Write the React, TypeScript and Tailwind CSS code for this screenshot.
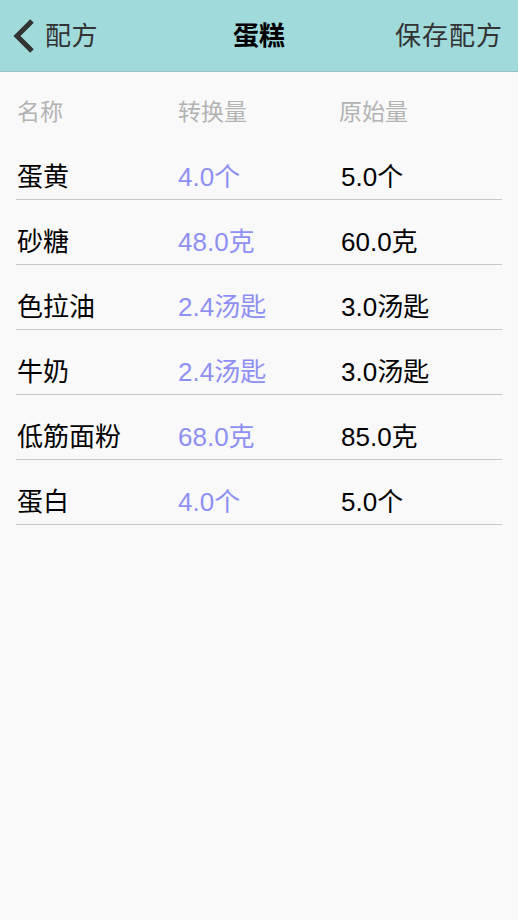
import React from 'react';

type Ingredient = {
  name: string;
  converted: string;
  original: string;
};

const ingredients: Ingredient[] = [
  { name: '蛋黄', converted: '4.0个', original: '5.0个' },
  { name: '砂糖', converted: '48.0克', original: '60.0克' },
  { name: '色拉油', converted: '2.4汤匙', original: '3.0汤匙' },
  { name: '牛奶', converted: '2.4汤匙', original: '3.0汤匙' },
  { name: '低筋面粉', converted: '68.0克', original: '85.0克' },
  { name: '蛋白', converted: '4.0个', original: '5.0个' },
];

const font = { fontFamily: '"Liberation Sans", "Noto Sans CJK SC", sans-serif' };

export default function App() {
  return (
    <div className="min-h-[920px] w-[518px] bg-[#f9f9f9]" style={font}>
      {/* nav bar */}
      <div className="grid h-[72px] grid-cols-[1fr_auto_1fr] items-center border-b border-[#98c4c5] bg-[#a0dadb] pl-[12px] pr-[15px]">
        <button className="flex items-center gap-[9px] justify-self-start text-[26px] leading-[30px] text-[#333]">
          <svg className="h-[34px] w-[24px]" viewBox="0 0 24 34" fill="none">
            <path d="M20 2L5 17l15 15" stroke="#333" strokeWidth="5" strokeLinecap="butt" strokeLinejoin="miter" />
          </svg>
          <span className="tracking-[0.5px]">配方</span>
        </button>
        <h1 className="pl-[3px] text-[26px] font-bold leading-[30px] text-black">蛋糕</h1>
        <button className="justify-self-end text-[26px] leading-[30px] tracking-[1px] text-[#333]">保存配方</button>
      </div>

      <div className="px-[16px]">
        {/* column titles */}
        <div className="flex h-[63px] items-end pb-[8px] text-[23px] leading-[30px] text-[#b3b3b3]">
          <span className="w-[162px] pl-[1px]">名称</span>
          <span className="w-[161px]">转换量</span>
          <span>原始量</span>
        </div>

        {ingredients.map((item) => (
          <div
            key={item.name}
            className="flex h-[65px] items-end border-b border-[#c8c8c8] pb-[7px] text-[26px] leading-[30px]"
          >
            <span className="w-[162px] pl-[1px] text-black">{item.name}</span>
            <span className="w-[163px] text-[#8f90f3]">{item.converted}</span>
            <span className="text-black">{item.original}</span>
          </div>
        ))}
      </div>
    </div>
  );
}
